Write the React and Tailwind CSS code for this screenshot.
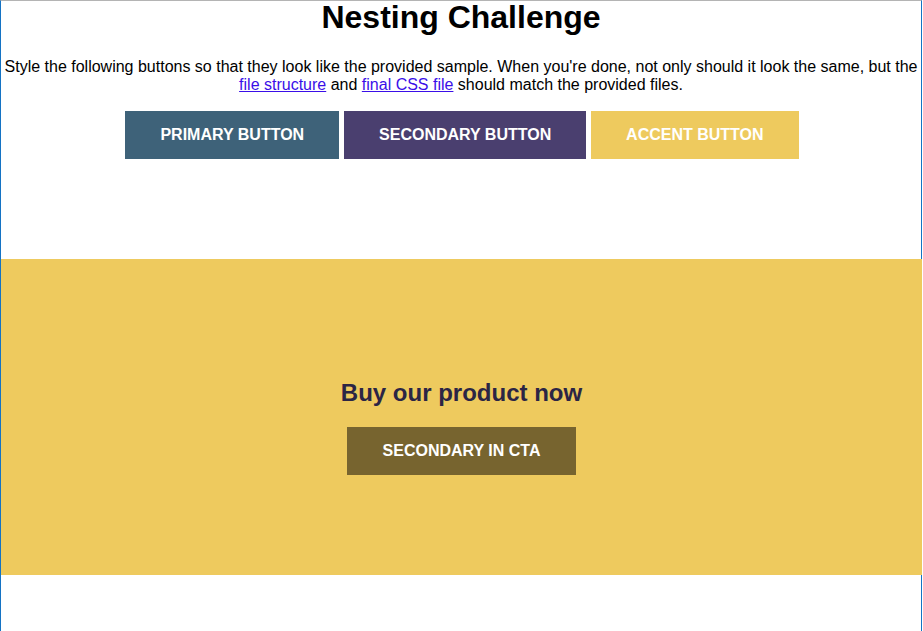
const buttons = [
  { label: "Primary Button", color: "bg-[#3e6279]" },
  { label: "Secondary Button", color: "bg-[#4a3f6f]" },
  { label: "Accent Button", color: "bg-[#eeca5e]" },
];

function Btn({ label, color }) {
  return (
    <a
      href="#"
      className={`${color} inline-block px-[35.2px] py-[15px] text-[16px] leading-[18px] font-bold uppercase text-white no-underline`}
    >
      {label}
    </a>
  );
}

export default function App() {
  return (
    <div
      className="w-[923px] h-[631px] overflow-hidden bg-white text-black"
      style={{ fontFamily: '"Liberation Sans", Arial, sans-serif' }}
    >
      <div className="w-[922px] h-[631px] border-l border-r border-t border-l-[#1473c4] border-r-[#1473c4] border-t-[#b4b4b4]">
        <h1 className="m-0 text-center text-[32px] leading-[32px] font-bold">
          Nesting Challenge
        </h1>
        <p className="mt-[25px] text-center text-[16px] leading-[18.4px]">
          Style the following buttons so that they look like the provided sample. When you're done, not only should it look the same, but the{" "}
          <a href="#" className="text-[#3a0ee8] underline">file structure</a> and{" "}
          <a href="#" className="text-[#3a0ee8] underline">final CSS file</a> should match the provided files.
        </p>

        <div className="mt-[16px] pl-[2px] flex justify-center gap-[4.5px]">
          {buttons.map((b) => (
            <Btn key={b.label} label={b.label} color={b.color} />
          ))}
        </div>

        <section className="mt-[100px] w-[921px] h-[316px] bg-[#eeca5e] pt-[120px] text-center">
          <h2 className="text-[24px] leading-[27.6px] font-bold text-[#2b2545]">
            Buy our product now
          </h2>
          <div className="mt-[20.4px] flex justify-center">
            <Btn label="Secondary in CTA" color="bg-[#77642f]" />
          </div>
        </section>
      </div>
    </div>
  );
}
